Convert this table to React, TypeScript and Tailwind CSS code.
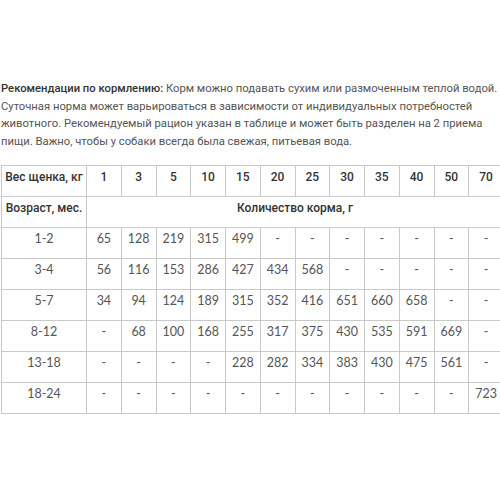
import React from 'react';

const weights = ['1', '3', '5', '10', '15', '20', '25', '30', '35', '40', '50', '70'];

const rows: { age: string; values: string[] }[] = [
  { age: '1-2', values: ['65', '128', '219', '315', '499', '-', '-', '-', '-', '-', '-', '-'] },
  { age: '3-4', values: ['56', '116', '153', '286', '427', '434', '568', '-', '-', '-', '-', '-'] },
  { age: '5-7', values: ['34', '94', '124', '189', '315', '352', '416', '651', '660', '658', '-', '-'] },
  { age: '8-12', values: ['-', '68', '100', '168', '255', '317', '375', '430', '535', '591', '669', '-'] },
  { age: '13-18', values: ['-', '-', '-', '-', '228', '282', '334', '383', '430', '475', '561', '-'] },
  { age: '18-24', values: ['-', '-', '-', '-', '-', '-', '-', '-', '-', '-', '-', '723'] },
];

const head =
  "border border-[#c9c9c9] align-top pt-[2px] px-0 text-center whitespace-nowrap font-medium text-[12px] leading-[18px] text-[#333] font-['Roboto',sans-serif]";
const cell =
  "border border-[#c9c9c9] align-top pt-[2px] px-0 text-center whitespace-nowrap text-[12.5px] leading-[18px] text-[#555] font-['Lato',sans-serif]";

export default function App() {
  return (
    <div className="w-[500px] h-[500px] overflow-hidden bg-white">
      <p className="pt-[80px] pl-px text-[11.25px] leading-[17.5px] text-[#555] font-['Roboto',sans-serif] whitespace-nowrap">
        <strong className="font-medium text-[#333]">Рекомендации по кормлению:</strong> Корм можно подавать сухим или размоченным теплой водой.
        <br />
        Суточная норма может варьироваться в зависимости от индивидуальных потребностей
        <br />
        животного. Рекомендуемый рацион указан в таблице и может быть разделен на 2 приема
        <br />
        пищи. Важно, чтобы у собаки всегда была свежая, питьевая вода.
      </p>

      <div className="mt-[15px] h-[250px] overflow-hidden">
        <table className="w-[502px] ml-px border-collapse table-fixed">
          <colgroup>
            <col className="w-[85px]" />
            {weights.map((w) => (
              <col key={w} className="w-[34.75px]" />
            ))}
          </colgroup>
          <tbody>
            <tr className="h-[31px]">
              <td className={head}>Вес щенка, кг</td>
              {weights.map((w) => (
                <td key={w} className={head}>
                  {w}
                </td>
              ))}
            </tr>
            <tr className="h-[31px]">
              <td className={head}>Возраст, мес.</td>
              <td colSpan={12} className={head}>
                Количество корма, г
              </td>
            </tr>
            {rows.map((r) => (
              <tr key={r.age} className="h-[31px]">
                <td className={cell}>{r.age}</td>
                {r.values.map((v, i) => (
                  <td key={i} className={cell}>
                    {v}
                  </td>
                ))}
              </tr>
            ))}
          </tbody>
        </table>
      </div>
    </div>
  );
}
